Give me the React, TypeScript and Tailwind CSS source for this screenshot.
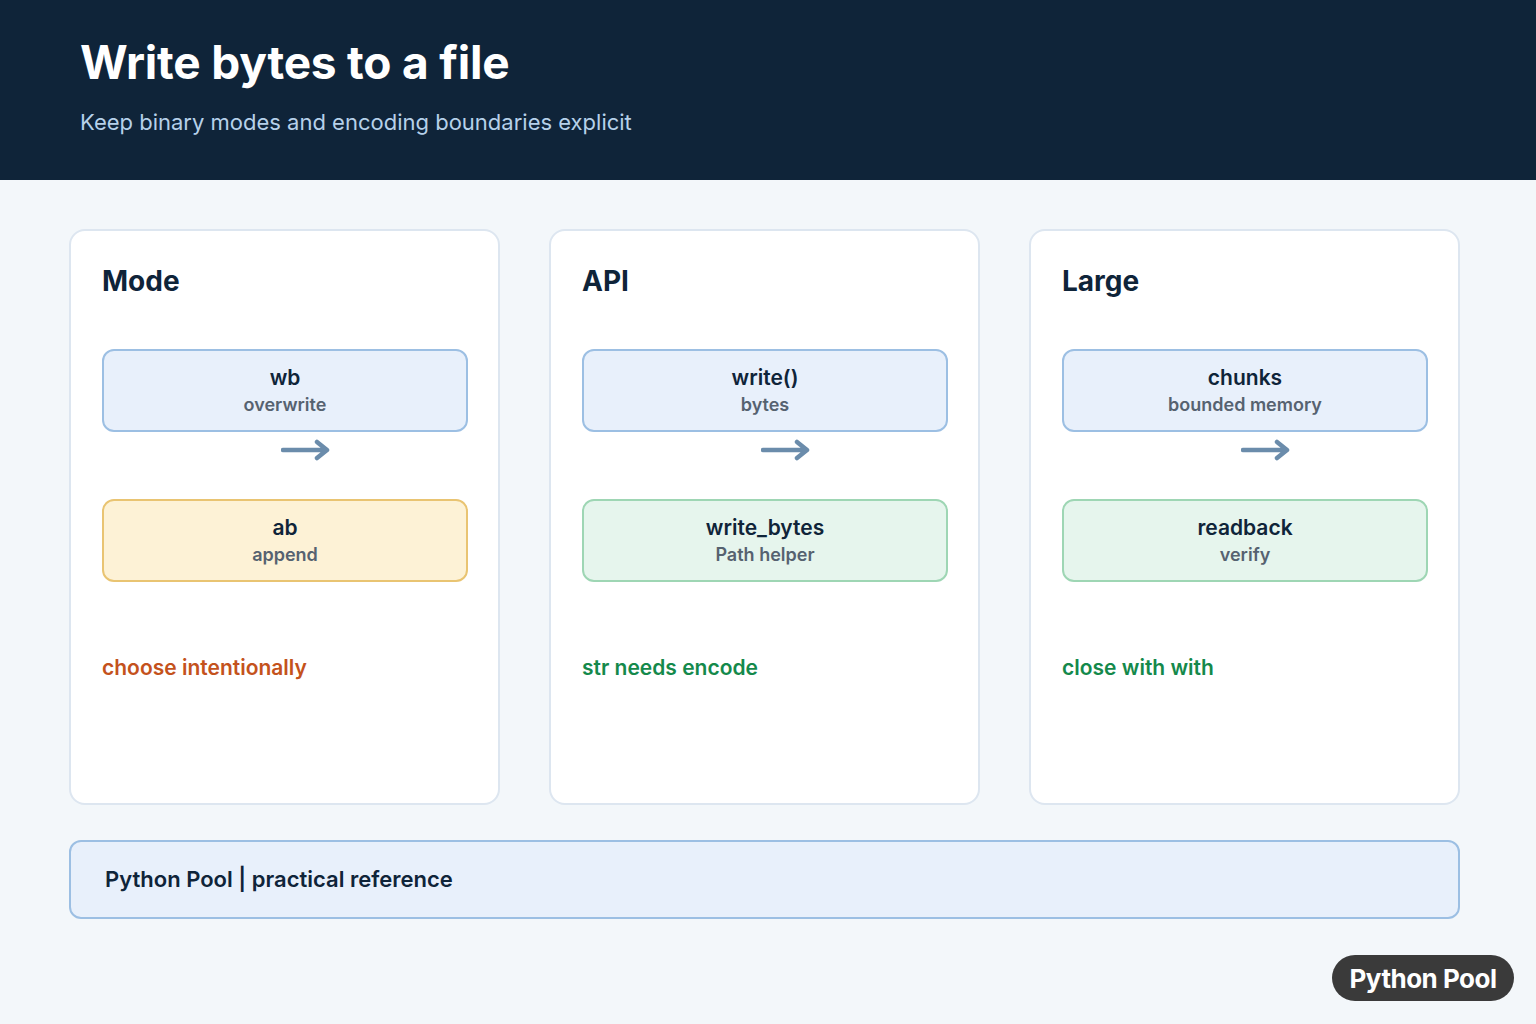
import React from "react";

const Arrow = () => (
  <svg width="50" height="24" viewBox="0 0 50 24" className="block">
    <path d="M2 12 H45 M36 4 L46 12 L36 20" stroke="#6b8cab" strokeWidth="4.5" fill="none" strokeLinecap="round" strokeLinejoin="round" />
  </svg>
);

type Box = { t: string; s: string; bg: string };
const Card = ({ title, a, b, note, noteColor }: { title: string; a: Box; b: Box; note: string; noteColor: string }) => (
  <div className="w-[431px] h-[576px] bg-white border-2 border-[#dde6f0] rounded-[16px] pl-[31px] pr-[30px] pt-[30px] flex flex-col">
    <div className="text-[28px] font-bold text-[#0f2439] leading-[40px] h-[40px]">{title}</div>
    <div className={`mt-[48px] h-[83px] rounded-[12px] border-2 flex flex-col items-center justify-center ${a.bg}`}>
      <div className="text-[21px] font-semibold text-[#0f2439] leading-[28px]">{a.t}</div>
      <div className="text-[18px] font-semibold text-[#566270] leading-[26px]">{a.s}</div>
    </div>
    <div className="h-[67px] flex items-start justify-center pl-[42px] pt-[6px]"><Arrow /></div>
    <div className={`h-[83px] rounded-[12px] border-2 flex flex-col items-center justify-center ${b.bg}`}>
      <div className="text-[21px] font-semibold text-[#0f2439] leading-[28px]">{b.t}</div>
      <div className="text-[18px] font-semibold text-[#566270] leading-[26px]">{b.s}</div>
    </div>
    <div className={`mt-[72px] text-[21px] font-semibold leading-[28px] ${noteColor}`}>{note}</div>
  </div>
);

const blue = "bg-[#e8f0fb] border-[#9cbfe3]";
const yellow = "bg-[#fdf2d6] border-[#e9c472]";
const green = "bg-[#e6f5ed] border-[#9ed6b4]";

export default function App() {
  return (
    <div className="w-[1536px] h-[1024px] bg-[#f3f7fa] relative" style={{ fontFamily: "Inter, 'Noto Sans', sans-serif" }}>
      <div className="h-[180px] bg-[#0f2439] px-[80px] pt-[34px]">
        <div className="text-[46px] font-bold text-white leading-[56px] tracking-[-0.2px]">Write bytes to a file</div>
        <div className="mt-[17px] text-[22px] text-[#b6d1ea] leading-[30px]">Keep binary modes and encoding boundaries explicit</div>
      </div>
      <div className="px-[69px] pt-[49px] flex gap-[49px]">
        <Card title="Mode" a={{ t: "wb", s: "overwrite", bg: blue }} b={{ t: "ab", s: "append", bg: yellow }} note="choose intentionally" noteColor="text-[#c4521c]" />
        <Card title="API" a={{ t: "write()", s: "bytes", bg: blue }} b={{ t: "write_bytes", s: "Path helper", bg: green }} note="str needs encode" noteColor="text-[#14894b]" />
        <Card title="Large" a={{ t: "chunks", s: "bounded memory", bg: blue }} b={{ t: "readback", s: "verify", bg: green }} note="close with with" noteColor="text-[#14894b]" />
      </div>
      <div className="ml-[69px] w-[1391px] mt-[35px] h-[79px] bg-[#e8f0fb] border-2 border-[#9cbfe3] rounded-[12px] flex items-center px-[34px]">
        <span className="text-[22px] font-semibold text-[#0f2439]">Python Pool | practical reference</span>
      </div>
      <div className="absolute left-[1332px] top-[955px] w-[182px] h-[46px] rounded-full bg-[#3a3a3a] flex items-center justify-center">
        <span className="text-[26px] font-bold text-white tracking-[-0.5px]">Python Pool</span>
      </div>
    </div>
  );
}
